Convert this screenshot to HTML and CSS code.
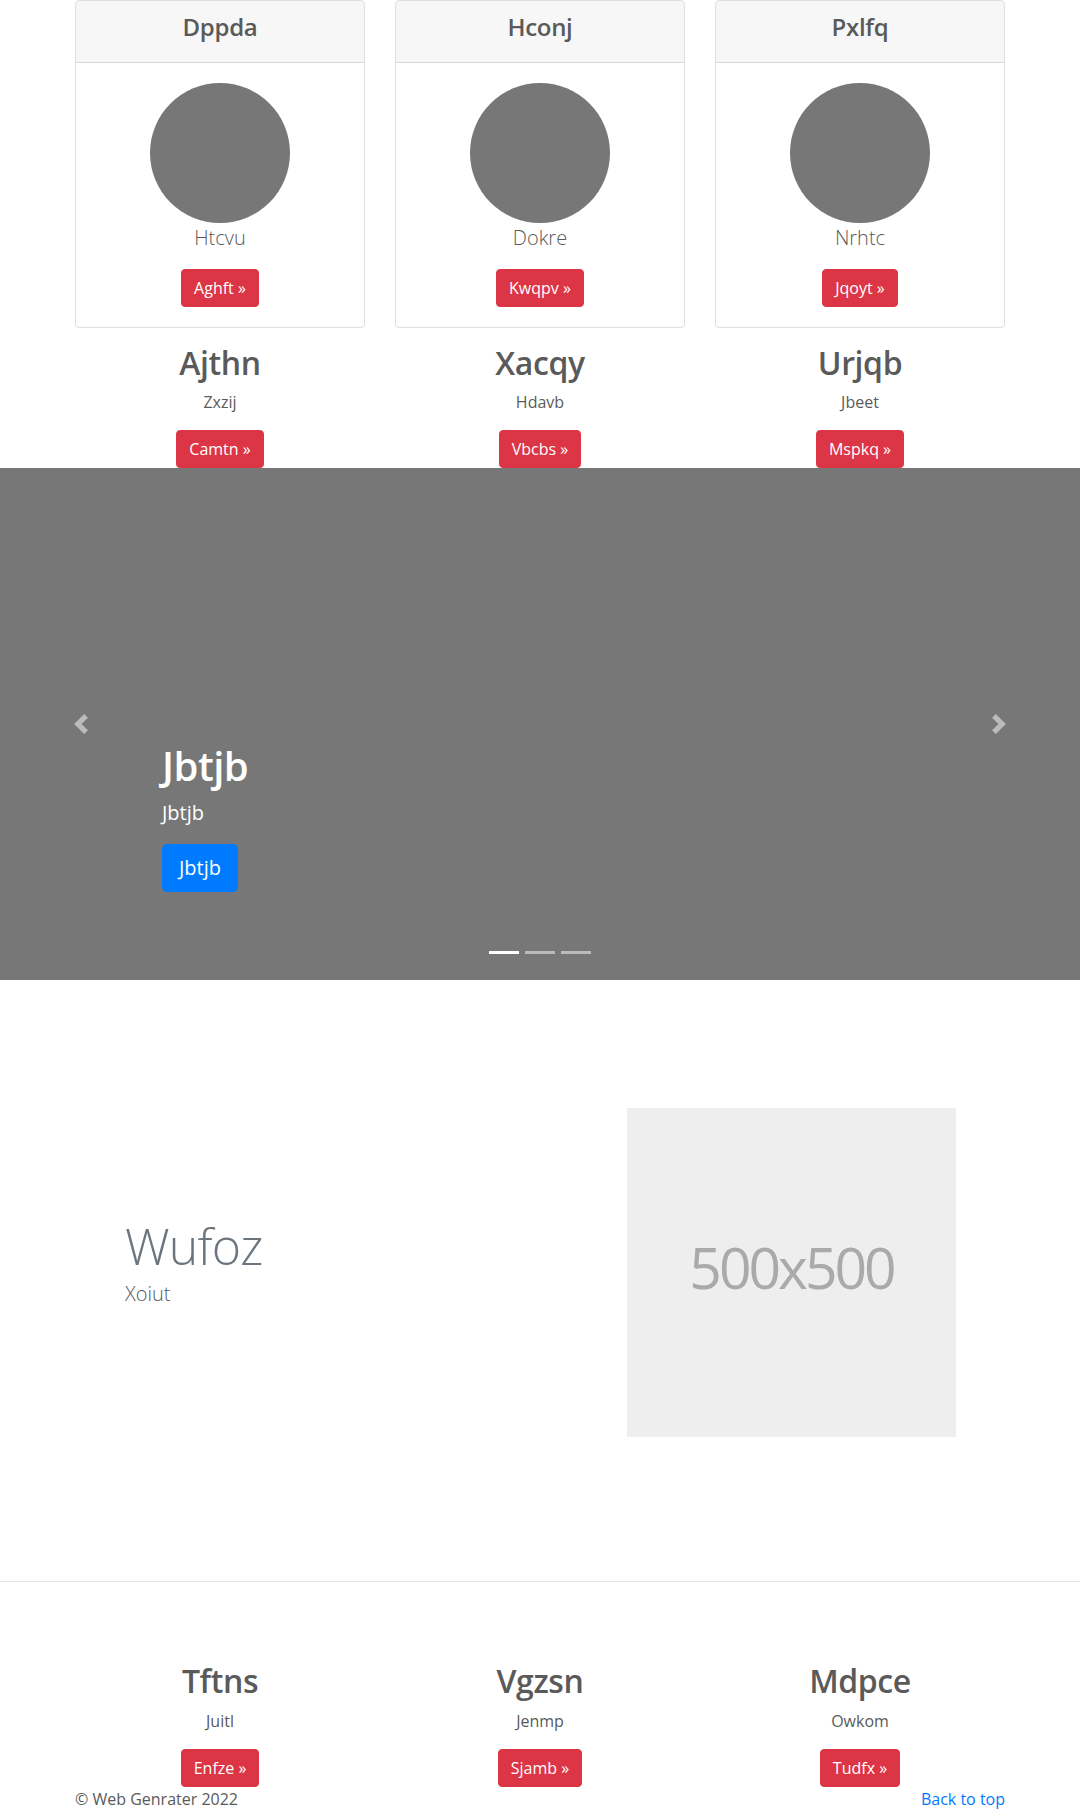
FILE: index.html
```html
<!DOCTYPE html>
<html lang="en">
<head>
<meta charset="utf-8">
<title>Web Genrater</title>
<link rel="stylesheet" href="styles.css">
</head>
<body>
<main>
  <section class="container">
    <div class="cols">
      <div class="card">
        <div class="card-header"><h4>Dppda</h4></div>
        <div class="card-body">
          <svg class="avatar" width="140" height="140" viewBox="0 0 140 140"><circle cx="70" cy="70" r="70" fill="#777"/></svg>
          <p class="lead">Htcvu</p>
          <a class="btn btn-danger" href="#">Aghft &raquo;</a>
        </div>
      </div>
      <div class="card">
        <div class="card-header"><h4>Hconj</h4></div>
        <div class="card-body">
          <svg class="avatar" width="140" height="140" viewBox="0 0 140 140"><circle cx="70" cy="70" r="70" fill="#777"/></svg>
          <p class="lead">Dokre</p>
          <a class="btn btn-danger" href="#">Kwqpv &raquo;</a>
        </div>
      </div>
      <div class="card">
        <div class="card-header"><h4>Pxlfq</h4></div>
        <div class="card-body">
          <svg class="avatar" width="140" height="140" viewBox="0 0 140 140"><circle cx="70" cy="70" r="70" fill="#777"/></svg>
          <p class="lead">Nrhtc</p>
          <a class="btn btn-danger" href="#">Jqoyt &raquo;</a>
        </div>
      </div>
    </div>
    <div class="cols">
      <div class="feature">
        <h2>Ajthn</h2>
        <p>Zxzij</p>
        <a class="btn btn-danger" href="#">Camtn &raquo;</a>
      </div>
      <div class="feature">
        <h2>Xacqy</h2>
        <p>Hdavb</p>
        <a class="btn btn-danger" href="#">Vbcbs &raquo;</a>
      </div>
      <div class="feature">
        <h2>Urjqb</h2>
        <p>Jbeet</p>
        <a class="btn btn-danger" href="#">Mspkq &raquo;</a>
      </div>
    </div>
  </section>

  <section class="carousel">
    <ol class="indicators">
      <li class="active"></li>
      <li></li>
      <li></li>
    </ol>
    <div class="caption">
      <h1>Jbtjb</h1>
      <p class="caption-text">Jbtjb</p>
      <p class="caption-action"><a class="btn btn-lg btn-primary" href="#">Jbtjb</a></p>
    </div>
    <a class="control prev" href="#"><svg width="20" height="20" viewBox="0 0 8 8"><path fill="#fff" d="M5.25 0l-4 4 4 4 1.5-1.5-2.5-2.5 2.5-2.5-1.5-1.5z"/></svg></a>
    <a class="control next" href="#"><svg width="20" height="20" viewBox="0 0 8 8"><path fill="#fff" d="M2.75 0l-1.5 1.5 2.5 2.5-2.5 2.5 1.5 1.5 4-4-4-4z"/></svg></a>
  </section>

  <section class="container featurette">
    <div class="featurette-text">
      <h2 class="featurette-heading">Wufoz</h2>
      <p class="lead">Xoiut</p>
    </div>
    <div class="placeholder">500x500</div>
  </section>

  <hr class="divider">

  <section class="container">
    <div class="cols">
      <div class="feature">
        <h2>Tftns</h2>
        <p>Juitl</p>
        <a class="btn btn-danger" href="#">Enfze &raquo;</a>
      </div>
      <div class="feature">
        <h2>Vgzsn</h2>
        <p>Jenmp</p>
        <a class="btn btn-danger" href="#">Sjamb &raquo;</a>
      </div>
      <div class="feature">
        <h2>Mdpce</h2>
        <p>Owkom</p>
        <a class="btn btn-danger" href="#">Tudfx &raquo;</a>
      </div>
    </div>
  </section>
</main>
<footer class="container footer">
  <p>&copy; Web Genrater 2022</p>
  <p><a href="#">Back to top</a></p>
</footer>
</body>
</html>
```

FILE: styles.css
```css
* { box-sizing: border-box; }

body {
  margin: 0;
  font-family: "Open Sans", "Noto Sans", sans-serif;
  font-size: 16px;
  line-height: 1.5;
  color: #5a5a5a;
  background: #fff;
}

a { color: #007bff; text-decoration: none; }

h1, h2, h4, p { margin: 0; }

.container {
  width: 960px;
  margin: 0 auto;
  padding: 0 15px;
}

.cols {
  display: grid;
  grid-template-columns: repeat(3, 1fr);
  column-gap: 30px;
}

/* cards */
.card {
  border: 1px solid rgba(0, 0, 0, .125);
  border-radius: 4px;
  margin-bottom: 16px;
  text-align: center;
  overflow: hidden;
}
.card-header {
  padding: 12px 20px;
  background: rgba(0, 0, 0, .03);
  border-bottom: 1px solid rgba(0, 0, 0, .125);
}
.card-header h4 {
  font-size: 24px;
  font-weight: 600;
  line-height: 1.2;
  margin-bottom: 8px;
  letter-spacing: -.3px;
}
.card-body {
  padding: 20px;
  display: flex;
  flex-direction: column;
  align-items: center;
}
.avatar { display: block; }

.lead {
  font-size: 20px;
  font-weight: 300;
  line-height: 1.5;
  margin-bottom: 16px;
}

/* buttons */
.btn {
  display: inline-block;
  padding: 6px 12px;
  font-size: 16px;
  line-height: 1.5;
  border: 1px solid transparent;
  border-radius: 4px;
  color: #fff;
  white-space: nowrap;
}
.btn-danger { background: #dc3545; border-color: #dc3545; }
.btn-primary { background: #007bff; border-color: #007bff; }
.btn-lg { padding: 8px 16px; font-size: 20px; line-height: 1.5; border-radius: 5px; }

/* marketing columns */
.feature {
  display: flex;
  flex-direction: column;
  align-items: center;
  text-align: center;
}
.feature h2 {
  font-size: 32px;
  font-weight: 600;
  line-height: 1.2;
  margin-bottom: 8px;
  letter-spacing: -.4px;
}
.feature p { margin-bottom: 16px; }

/* carousel */
.carousel {
  position: relative;
  height: 512px;
  background: #777;
}
.caption {
  position: absolute;
  left: 15%;
  right: 15%;
  bottom: 52px;
  padding: 20px 0;
  color: #fff;
}
.caption h1 {
  font-size: 40px;
  font-weight: 600;
  line-height: 1.2;
  margin-bottom: 8px;
  letter-spacing: -.5px;
}
.caption-text {
  font-size: 20px;
  line-height: 1.5;
  margin-bottom: 16px;
}
.caption-action {
  display: flex;
  margin-bottom: 16px;
}
.control {
  position: absolute;
  top: 0;
  bottom: 0;
  width: 15%;
  display: flex;
  align-items: center;
  justify-content: center;
  opacity: .5;
}
.control svg { display: block; }
.prev { left: 0; }
.next { right: 0; }
.indicators {
  position: absolute;
  left: 15%;
  right: 15%;
  bottom: 10px;
  margin: 0 0 16px;
  padding: 0;
  list-style: none;
  display: flex;
  justify-content: center;
  z-index: 2;
}
.indicators li {
  width: 30px;
  height: 3px;
  margin: 0 3px;
  background: rgba(255, 255, 255, .5);
}
.indicators li.active { background: #fff; }

/* featurette */
.featurette {
  margin-top: 128px;
  display: flex;
  align-items: center;
  justify-content: space-between;
  padding: 0 64px 0 65px;
}
.featurette-heading {
  font-size: 50px;
  font-weight: 300;
  line-height: 1;
  letter-spacing: -.8px;
  color: #6c757d;
  margin-bottom: 8px;
}
.placeholder {
  width: 329px;
  height: 329px;
  padding-bottom: 10px;
  background: #eee;
  color: #aaa;
  display: flex;
  align-items: center;
  justify-content: center;
  font-size: 57px;
  letter-spacing: -3px;
  line-height: 1;
}

.divider {
  margin: 144px 0 80px;
  border: 0;
  border-top: 1px solid rgba(0, 0, 0, .1);
  height: 0;
}

.footer {
  display: flex;
  justify-content: space-between;
}
```
